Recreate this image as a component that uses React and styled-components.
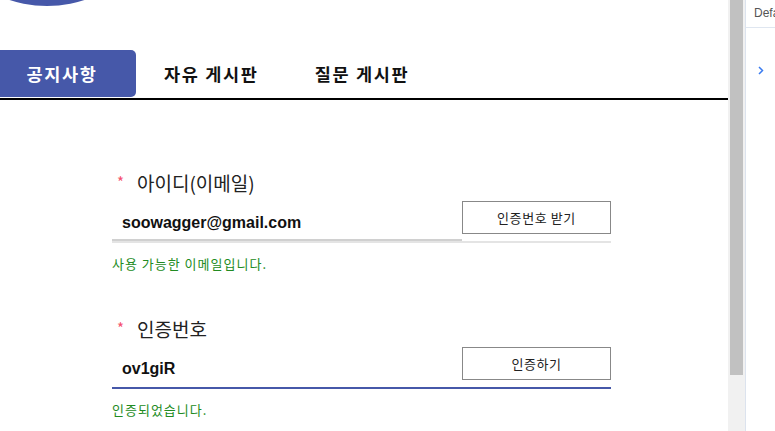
import React from 'react';
import styled, { createGlobalStyle } from 'styled-components';

const GlobalStyle = createGlobalStyle`
  html, body {
    margin: 0;
    padding: 0;
    background: #fff;
  }
  body {
    font-family: "Noto Sans CJK KR", "Noto Sans", sans-serif;
    color: #222;
  }
`;

const Page = styled.div`
  display: flex;
  width: 775px;
  height: 431px;
  overflow: hidden;
`;

const Main = styled.div`
  width: 728px;
  flex-shrink: 0;
  overflow: hidden;
`;

const Header = styled.div`
  height: 50px;
  overflow: hidden;
`;

const Avatar = styled.div`
  width: 240px;
  height: 240px;
  border-radius: 50%;
  background: #4658a9;
  margin-top: -234px;
  margin-left: -73px;
`;

const TabBar = styled.div`
  display: flex;
  height: 48px;
  margin-left: -12px;
  border-bottom: 2px solid #000;
`;

const Tab = styled.div`
  display: flex;
  align-items: center;
  justify-content: center;
  padding: 0 28px;
  min-width: ${p => (p.$active ? '148px' : 'auto')};
  box-sizing: border-box;
  height: 47px;
  font-size: 17.5px;
  font-weight: 700;
  letter-spacing: 1.7px;
  color: ${p => (p.$active ? '#fff' : '#111')};
  background: ${p => (p.$active ? '#4658a9' : 'transparent')};
  border-radius: 0 5px 5px 0;
`;

const Form = styled.div`
  width: 499px;
  padding: 70px 0 0 112px;
`;

const Field = styled.div`
  margin-bottom: 43px;
`;

const Label = styled.div`
  display: flex;
  align-items: center;
  height: 24px;
  font-size: 19px;
  color: #222;
`;

const Star = styled.span`
  color: #f5506e;
  font-size: 15px;
  width: 25px;
  padding-left: 5px;
  box-sizing: border-box;
  margin-top: -2px;
`;

const Row = styled.div`
  display: flex;
  align-items: flex-start;
  height: 41px;
  margin-top: 6px;
  border-bottom: 2px solid ${p => (p.$focus ? '#4658a9' : '#e4e4e4')};
`;

const Input = styled.div`
  flex: 1;
  height: 41px;
  box-sizing: border-box;
  padding: 6px 0 0 10px;
  display: flex;
  align-items: center;
  font-family: "Liberation Sans", Arial, sans-serif;
  font-size: 16px;
  font-weight: 700;
  color: #111;
  border-bottom: 2px solid ${p => (p.$focus ? 'transparent' : '#d0d0d0')};
`;

const Button = styled.button`
  width: 149px;
  height: 33px;
  margin-top: 1px;
  background: #fff;
  border: 1px solid #888;
  font-family: "Noto Sans CJK KR", sans-serif;
  font-size: 13px;
  letter-spacing: 0.6px;
  color: #222;
  padding: 0;
`;

const Help = styled.div`
  margin-top: 12px;
  font-size: 13px;
  line-height: 18px;
  letter-spacing: 1px;
  color: #228b22;
`;

const Scrollbar = styled.div`
  width: 17px;
  flex-shrink: 0;
  background: #f1f1f1;
  display: flex;
  justify-content: center;
`;

const Thumb = styled.div`
  width: 13px;
  height: 375px;
  background: #c1c1c1;
`;

const Side = styled.div`
  flex: 1;
  border-left: 1px solid #dce3ee;
  overflow: hidden;
`;

const SideHead = styled.div`
  height: 27px;
  border-bottom: 1px solid #dfe6f0;
  padding-left: 8px;
  font-family: "Liberation Sans", Arial, sans-serif;
  font-size: 12px;
  line-height: 27px;
  color: #555;
  white-space: nowrap;
  overflow: hidden;
`;

const Chevron = styled.div`
  padding: 28px 0 0 12px;
  color: #3a7bf0;
`;

const fields = [
  { label: '아이디(이메일)', value: 'soowagger@gmail.com', btn: '인증번호 받기', help: '사용 가능한 이메일입니다.' },
  { label: '인증번호', value: 'ov1giR', btn: '인증하기', help: '인증되었습니다.', focus: true },
];

export default function App() {
  return (
    <>
      <GlobalStyle />
      <Page>
        <Main>
          <Header>
            <Avatar />
          </Header>
          <TabBar>
            <Tab $active>공지사항</Tab>
            <Tab>자유 게시판</Tab>
            <Tab>질문 게시판</Tab>
          </TabBar>
          <Form>
            {fields.map(f => (
              <Field key={f.label}>
                <Label>
                  <Star>*</Star>
                  {f.label}
                </Label>
                <Row $focus={f.focus}>
                  <Input $focus={f.focus}>{f.value}</Input>
                  <Button>{f.btn}</Button>
                </Row>
                <Help>{f.help}</Help>
              </Field>
            ))}
          </Form>
        </Main>
        <Scrollbar>
          <Thumb />
        </Scrollbar>
        <Side>
          <SideHead>Default</SideHead>
          <Chevron>
            <svg width="6" height="9" viewBox="0 0 6 9">
              <path d="M1 1 L4.5 4.5 L1 8" fill="none" stroke="currentColor" strokeWidth="1.5" />
            </svg>
          </Chevron>
        </Side>
      </Page>
    </>
  );
}
